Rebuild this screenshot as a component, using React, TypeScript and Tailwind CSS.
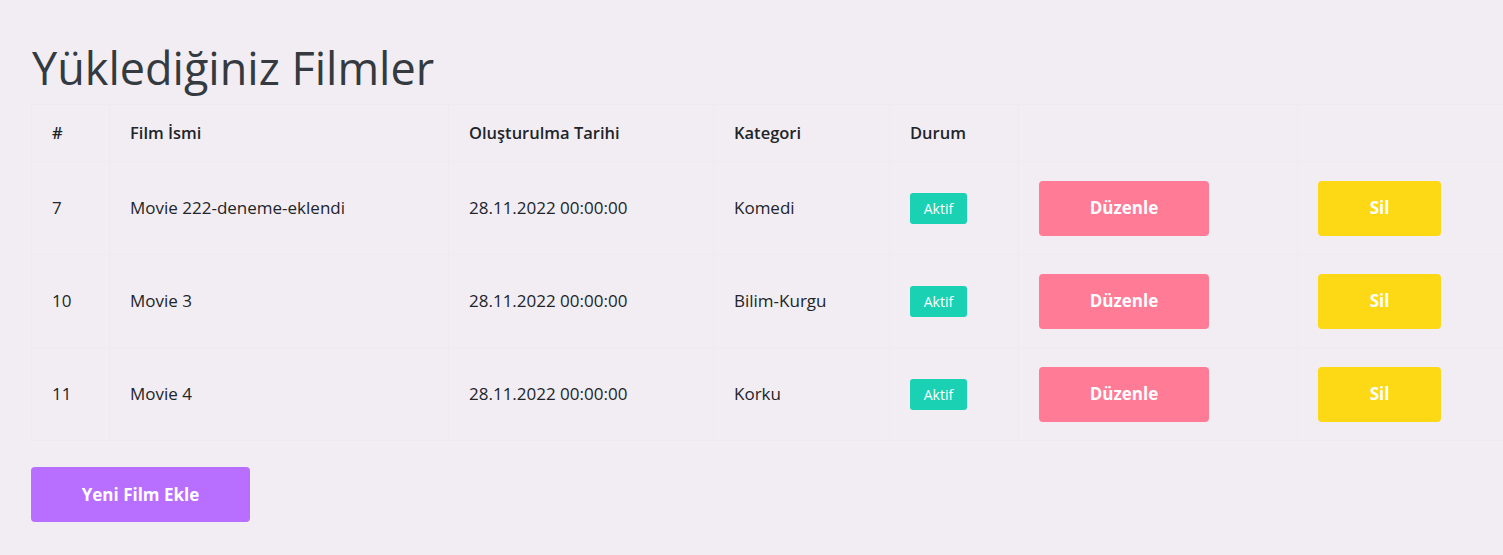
import React from "react";

interface Movie {
  id: number;
  name: string;
  createdAt: string;
  category: string;
  active: boolean;
}

const movies: Movie[] = [
  { id: 7, name: "Movie 222-deneme-eklendi", createdAt: "28.11.2022 00:00:00", category: "Komedi", active: true },
  { id: 10, name: "Movie 3", createdAt: "28.11.2022 00:00:00", category: "Bilim-Kurgu", active: true },
  { id: 11, name: "Movie 4", createdAt: "28.11.2022 00:00:00", category: "Korku", active: true },
];

const App: React.FC = () => {
  return (
    <div
      className="min-h-[555px] w-full overflow-hidden bg-[#f1edf3] text-[#212529]"
      style={{ fontFamily: "'Open Sans', 'Noto Sans', sans-serif" }}
    >
      <div className="pl-[31px] pt-[42px]">
        <h1 className="text-[45px] leading-[52px] font-medium text-[#343a40] ml-[1px] mb-[10px]">
          Yüklediğiniz Filmler
        </h1>

        <table className="table-fixed border-collapse w-[1500px] text-[17px]">
          <colgroup>
            <col className="w-[78px]" />
            <col className="w-[339px]" />
            <col className="w-[265px]" />
            <col className="w-[176px]" />
            <col className="w-[129px]" />
            <col className="w-[279px]" />
            <col />
          </colgroup>
          <thead>
            <tr className="h-[57px] text-left text-[16.5px]">
              <th className="border border-[#edeaf0] pl-[20px] font-semibold">#</th>
              <th className="border border-[#edeaf0] pl-[20px] font-semibold">Film İsmi</th>
              <th className="border border-[#edeaf0] pl-[20px] font-semibold">Oluşturulma Tarihi</th>
              <th className="border border-[#edeaf0] pl-[20px] font-semibold">Kategori</th>
              <th className="border border-[#edeaf0] pl-[20px] font-semibold">Durum</th>
              <th className="border border-[#edeaf0]"></th>
              <th className="border border-[#edeaf0]"></th>
            </tr>
          </thead>
          <tbody>
            {movies.map((m) => (
              <tr key={m.id} className="h-[93px]">
                <td className="border border-[#edeaf0] pl-[20px]">{m.id}</td>
                <td className="border border-[#edeaf0] pl-[20px]">{m.name}</td>
                <td className="border border-[#edeaf0] pl-[20px]">{m.createdAt}</td>
                <td className="border border-[#edeaf0] pl-[20px]">{m.category}</td>
                <td className="border border-[#edeaf0] pl-[20px]">
                  {m.active && (
                    <span className="inline-flex items-center justify-center w-[57px] h-[31px] rounded-[3px] bg-[#1bd1b3] text-white text-[14px] font-medium">
                      Aktif
                    </span>
                  )}
                </td>
                <td className="border border-[#edeaf0] pl-[20px]">
                  <button className="w-[170px] h-[55px] rounded-[4px] bg-[#ff7b96] text-white font-bold text-[17px]">
                    Düzenle
                  </button>
                </td>
                <td className="border border-[#edeaf0] pl-[20px]">
                  <button className="w-[123px] h-[55px] rounded-[4px] bg-[#fdd814] text-white font-bold text-[17px]">
                    Sil
                  </button>
                </td>
              </tr>
            ))}
          </tbody>
        </table>

        <button className="mt-[26px] w-[219px] h-[55px] rounded-[4px] bg-[#b86eff] text-white font-bold text-[17px]">
          Yeni Film Ekle
        </button>
      </div>
    </div>
  );
};

export default App;
